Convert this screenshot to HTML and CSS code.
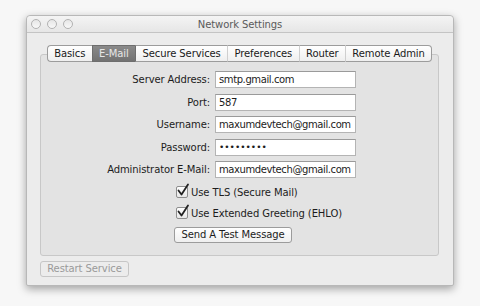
FILE: index.html
```html
<!DOCTYPE html>
<html>
<head>
<meta charset="utf-8">
<link rel="stylesheet" href="styles.css">
</head>
<body>
<div class="window">
  <div class="titlebar">
    <div class="lights">
      <span class="light"></span><span class="light"></span><span class="light"></span>
    </div>
    <div class="title">Network Settings</div>
  </div>
  <div class="content">
    <div class="tabs">
      <div class="tab">Basics</div>
      <div class="tab selected">E-Mail</div>
      <div class="tab">Secure Services</div>
      <div class="tab">Preferences</div>
      <div class="tab">Router</div>
      <div class="tab last">Remote Admin</div>
    </div>
    <div class="panel">
      <div class="form">
        <label class="lbl">Server Address:</label><div class="field">smtp.gmail.com</div>
        <label class="lbl">Port:</label><div class="field">587</div>
        <label class="lbl">Username:</label><div class="field">maxumdevtech@gmail.com</div>
        <label class="lbl">Password:</label><div class="field dots">•••••••••</div>
        <label class="lbl">Administrator E-Mail:</label><div class="field">maxumdevtech@gmail.com</div>
      </div>
      <div class="checks">
        <div class="check">
          <span class="box"><svg width="14" height="14" viewBox="0 0 14 14"><path d="M2.5 7.5 L5.5 11.5 L12 1.5" fill="none" stroke="#222" stroke-width="1.8" stroke-linecap="round" stroke-linejoin="round"/></svg></span>
          <span>Use TLS (Secure Mail)</span>
        </div>
        <div class="check">
          <span class="box"><svg width="14" height="14" viewBox="0 0 14 14"><path d="M2.5 7.5 L5.5 11.5 L12 1.5" fill="none" stroke="#222" stroke-width="1.8" stroke-linecap="round" stroke-linejoin="round"/></svg></span>
          <span>Use Extended Greeting (EHLO)</span>
        </div>
        <div class="btn send">Send A Test Message</div>
      </div>
    </div>
    <div class="btn restart">Restart Service</div>
  </div>
</div>
</body>
</html>
```
FILE: styles.css
```css
html, body {
  margin: 0;
  padding: 0;
}
body {
  width: 480px;
  height: 306px;
  background: #f7f7f7;
  font-family: "DejaVu Sans", "Liberation Sans", sans-serif;
  font-size: 10px;
  letter-spacing: -0.1px;
  color: #1c1c1c;
  overflow: hidden;
}
.window {
  margin: 15px 0 0 26px;
  width: 428px;
  height: 271px;
  background: #ececec;
  border: 1px solid #b8b8b8;
  border-radius: 4px 4px 2px 2px;
  box-shadow: 0 3px 8px rgba(0,0,0,0.35);
  box-sizing: border-box;
}
.titlebar {
  position: relative;
  height: 16px;
  border-bottom: 1px solid #c4c4c4;
  background: linear-gradient(#f4f4f4, #e6e6e6);
  border-radius: 4px 4px 0 0;
  display: flex;
  align-items: center;
  justify-content: center;
}
.lights {
  position: absolute;
  left: 4px;
  top: 3px;
  display: flex;
  gap: 6px;
}
.light {
  width: 8px;
  height: 8px;
  border-radius: 50%;
  border: 1px solid #b2b2b2;
  background: linear-gradient(#e6e6e6, #f8f8f8);
}
.title {
  color: #5a5a5a;
  margin-top: 1px;
}
.content {
  padding: 12px 14px 0 13px;
}
.tabs {
  display: flex;
  justify-content: center;
  position: relative;
  z-index: 1;
  margin-bottom: -8px;
}
.tab {
  height: 15px;
  line-height: 15px;
  padding: 0 6.4px;
  white-space: nowrap;
  background: linear-gradient(#ffffff, #efefef);
  border-top: 1px solid #9c9c9c;
  border-bottom: 1px solid #9c9c9c;
  border-left: 1px solid #cfcfcf;
  color: #1a1a1a;
}
.tab:first-child {
  border-left: 1px solid #9c9c9c;
  border-radius: 4px 0 0 4px;
}
.tab.last {
  border-right: 1px solid #9c9c9c;
  border-radius: 0 4px 4px 0;
}
.tab.selected {
  background: linear-gradient(#8a8a8a, #727272);
  color: #e6e6e6;
  border-left-color: #6e6e6e;
  border-top-color: #6e6e6e;
  border-bottom-color: #6e6e6e;
}
.tab.selected + .tab {
  border-left-color: #6e6e6e;
}
.panel {
  height: 202px;
  background: #e3e3e3;
  border: 1px solid #c8c8c8;
  border-radius: 3px;
  box-sizing: border-box;
  padding-top: 16px;
}
.form {
  display: grid;
  grid-template-columns: 169px 141px;
  column-gap: 5px;
  row-gap: 5.5px;
  align-items: center;
}
.lbl {
  text-align: right;
  white-space: nowrap;
}
.field {
  line-height: 15px;
  background: #fff;
  border: 1px solid #b4b4b4;
  border-top-color: #9a9a9a;
  padding-left: 3px;
  box-sizing: border-box;
  height: 17px;
  white-space: nowrap;
  overflow: hidden;
  letter-spacing: -0.4px;
}
.field.dots {
  font-size: 9px;
  letter-spacing: 0;
}
.checks {
  margin-left: 135px;
  margin-top: 7px;
  display: flex;
  flex-direction: column;
  align-items: flex-start;
}
.check {
  display: flex;
  align-items: center;
  height: 14px;
  margin-bottom: 7px;
}
.box {
  position: relative;
  width: 10px;
  height: 10px;
  border: 1px solid #8e8e8e;
  border-radius: 2px;
  background: linear-gradient(#ffffff, #e8e8e8);
  margin-right: 3px;
}
.box svg {
  position: absolute;
  left: -1px;
  top: -4px;
}
.btn {
  height: 16px;
  line-height: 14px;
  border: 1px solid #9c9c9c;
  border-radius: 3px;
  background: linear-gradient(#ffffff, #efefef);
  text-align: center;
  box-sizing: border-box;
}
.send {
  width: 118px;
  margin-left: -2px;
}
.restart {
  width: 89px;
  margin-top: 5px;
  color: #9a9a9a;
  border-color: #c6c6c6;
  background: #ececec;
}
```
